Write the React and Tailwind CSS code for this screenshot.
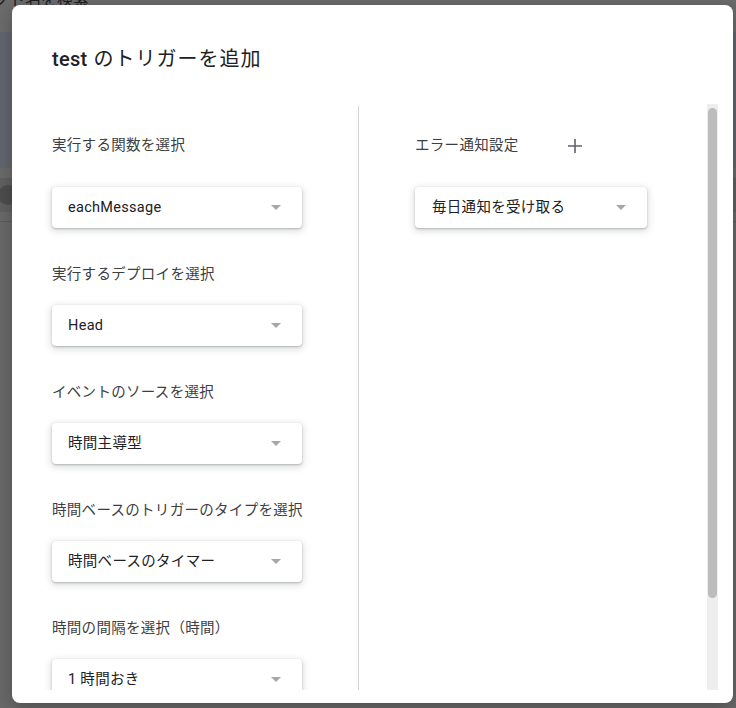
import React from "react";

const fontStack = "font-['Roboto','Noto_Sans_CJK_JP',sans-serif]";

const Arrow = () => (
  <svg width="10" height="5" viewBox="0 0 10 5" className="shrink-0">
    <path d="M0 0h10L5 5z" fill="#a7a7a7" />
  </svg>
);

const Select = ({ value, width = "w-[250px]", pad = "pl-4" }) => (
  <div
    className={`${width} h-[41px] shrink-0 rounded bg-white flex items-center justify-between ${pad} pr-[21px] shadow-[0_1px_2px_rgba(60,64,67,0.3),0_2px_6px_2px_rgba(60,64,67,0.15)]`}
  >
    <span className="text-[14.5px] tracking-[0.3px] text-[#202124] leading-5">{value}</span>
    <Arrow />
  </div>
);

const Label = ({ children }) => (
  <div className="h-5 leading-5 text-[14.5px] tracking-[0.3px] text-[#3c4043] whitespace-nowrap">
    {children}
  </div>
);

const groups = [
  { label: "実行するデプロイを選択", value: "Head" },
  { label: "イベントのソースを選択", value: "時間主導型" },
  { label: "時間ベースのトリガーのタイプを選択", value: "時間ベースのタイマー" },
  { label: "時間の間隔を選択（時間）", value: "1 時間おき" },
];

export default function App() {
  return (
    <div className={`relative w-[736px] h-[708px] overflow-hidden bg-[#686868] ${fontStack}`}>
      {/* page behind the dialog */}
      <div className="flex flex-col w-full">
        <div className="h-[32px] bg-[#6b6b6b] relative overflow-hidden">
          <span className="absolute left-[-7px] top-[-12px] text-[16px] leading-6 text-[#1e1e1e] whitespace-nowrap">
            クト名を検索
          </span>
        </div>
        <div className="h-[136px] bg-[#61656d]" />
        <div className="h-[10px] bg-[#6a6a6a]" />
        <div className="h-[34px] bg-[#606060] flex items-center">
          <div className="w-5 h-5 rounded-full bg-[#4d4d4d] ml-[-2px]" />
        </div>
        <div className="h-[10px] bg-[#686868] border-b border-[#5b5b5b]" />
        <div className="flex-1 bg-[#686868]" />
      </div>

      {/* dialog */}
      <div className="absolute left-[12px] top-[5px] w-[721px] h-[698px] bg-white rounded-lg shadow-[0_4px_16px_rgba(0,0,0,0.25)] flex flex-col pr-[15px] pb-[13px]">
        <div className="pt-10 pl-10 h-[68px] shrink-0">
          <h1 className="text-[20px] leading-7 tracking-[1px] text-[#202124]">
            <span className="font-medium tracking-[0.3px]">test</span> のトリガーを追加
          </h1>
        </div>

        <div className="mt-[31px] h-[586px] flex">
          <div className="flex-1 flex overflow-hidden pl-10">
            {/* left column */}
            <div className="w-[306px] shrink-0 pt-8 flex flex-col">
              <Label>実行する関数を選択</Label>
              <div className="mt-[31px]">
                <Select value="eachMessage" />
              </div>
              {groups.map((g) => (
                <div key={g.label} className="mt-[37px] flex flex-col">
                  <Label>{g.label}</Label>
                  <div className="mt-5">
                    <Select value={g.value} />
                  </div>
                </div>
              ))}
            </div>

            <div className="w-px bg-[#d2d2d2] mt-[2px] shrink-0" />

            {/* right column */}
            <div className="flex-1 pl-[56px] pt-8 flex flex-col">
              <div className="flex items-center h-5">
                <Label>エラー通知設定</Label>
                <svg width="14" height="14" viewBox="0 0 14 14" className="ml-[49px]">
                  <path d="M7 0v14M0 7h14" stroke="#5f6368" strokeWidth="1.6" />
                </svg>
              </div>
              <div className="mt-[31px]">
                <Select value="毎日通知を受け取る" width="w-[232px]" pad="pl-[17px]" />
              </div>
            </div>
          </div>

          {/* scrollbar */}
          <div className="w-[11px] bg-[#eeeeee] shrink-0 px-px pt-1">
            <div className="h-[490px] rounded-full bg-[#bcbcbc]" />
          </div>
        </div>
      </div>
    </div>
  );
}
